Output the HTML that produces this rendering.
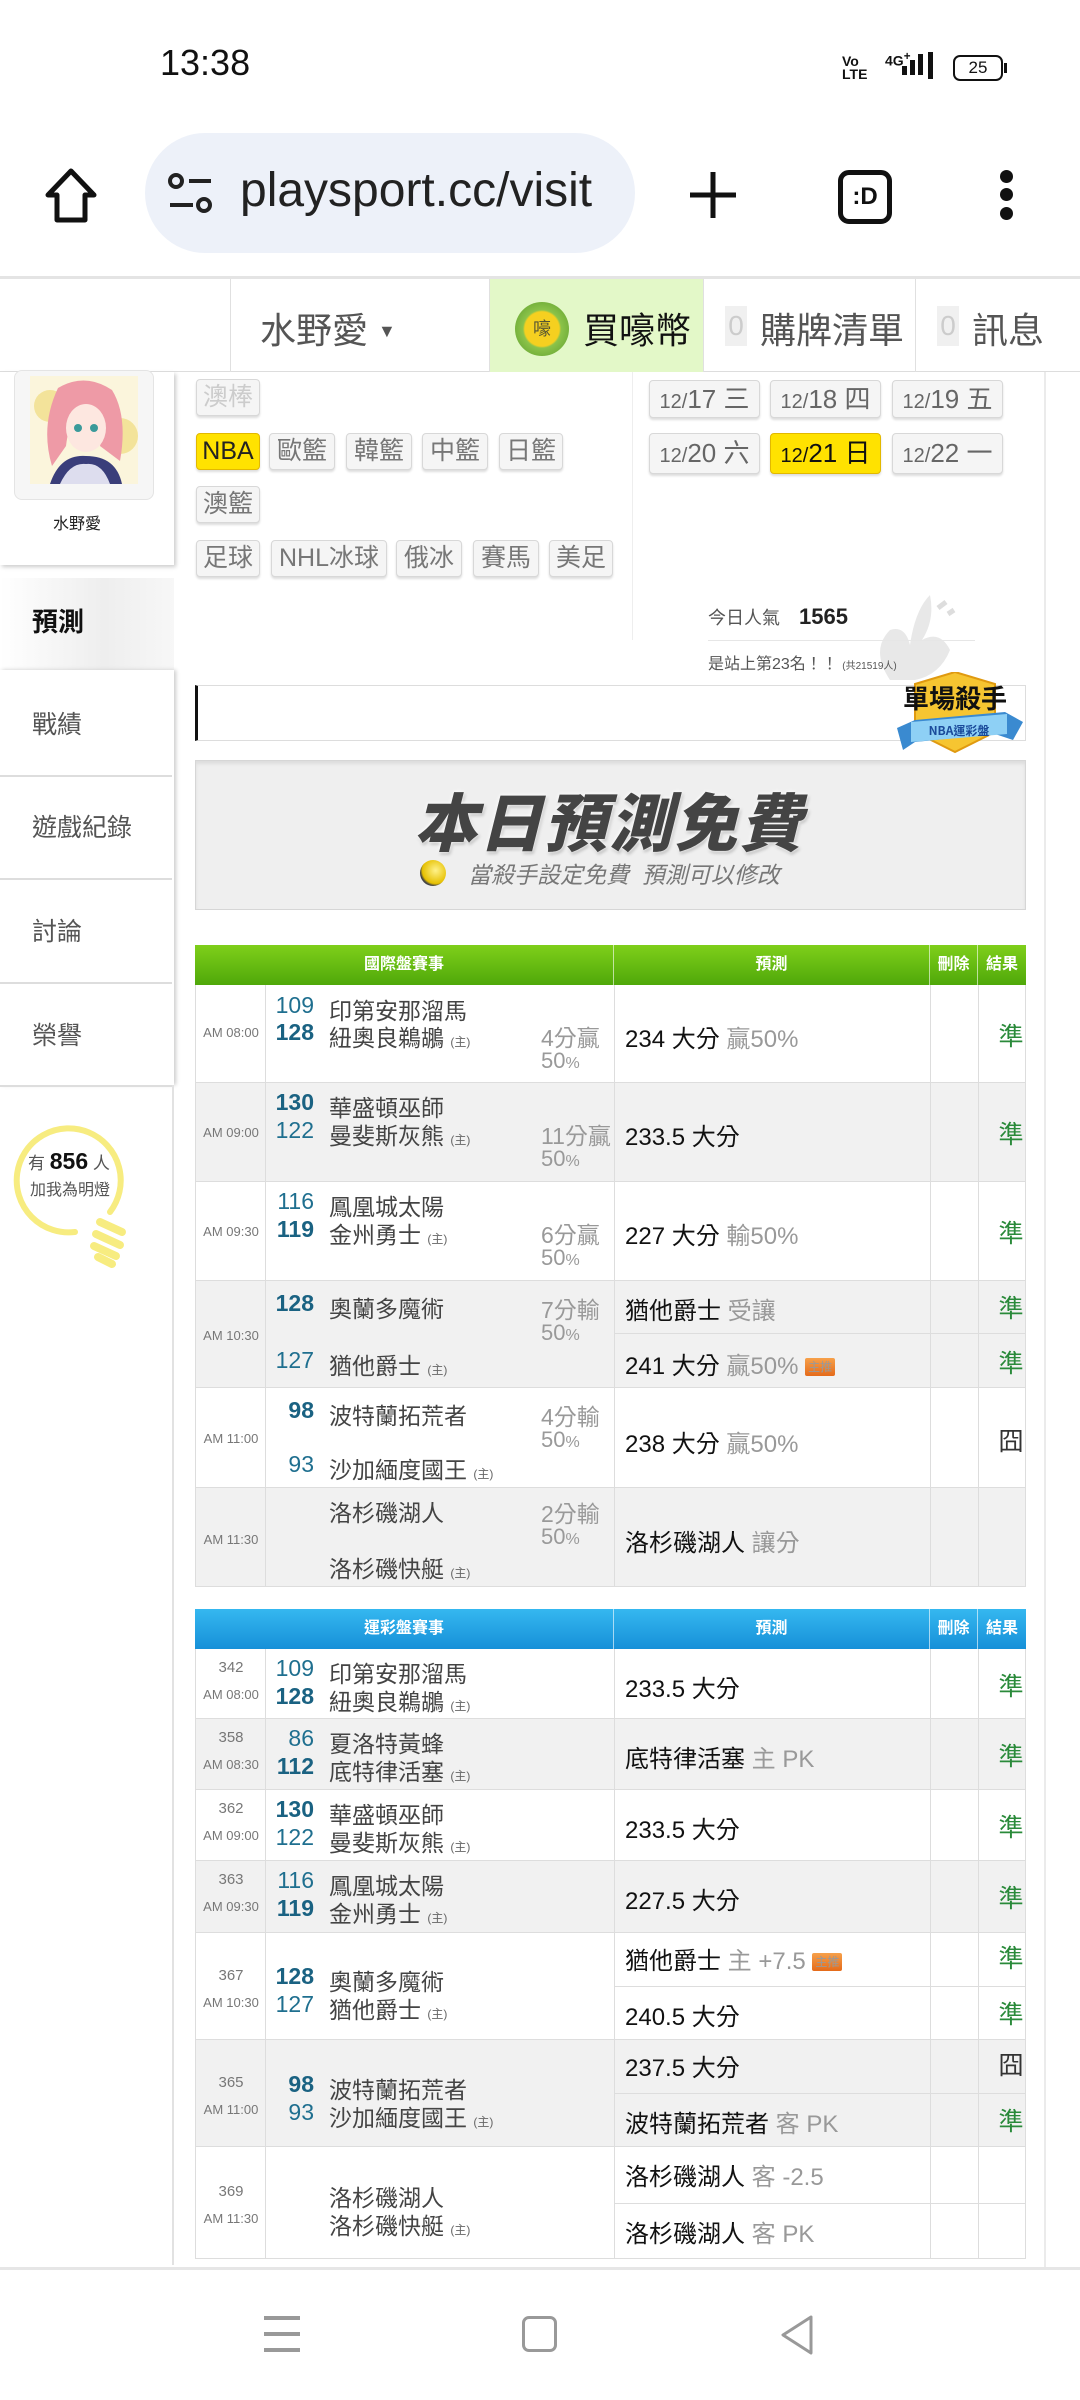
<!DOCTYPE html>
<html><head><meta charset="utf-8"><style>
*{margin:0;padding:0;box-sizing:border-box}
body{width:1080px;height:2400px;position:relative;background:#fff;font-family:"Liberation Sans","Noto Sans CJK TC",sans-serif;color:#333;overflow:hidden}
.a{position:absolute;white-space:nowrap}
.tag{position:absolute;height:37px;background:#f5f5f5;border:1px solid #d8d8d8;border-radius:4px;box-shadow:0 2px 2px #ddd;color:#777;font-size:25px;line-height:35px;text-align:center}
.dt{position:absolute;width:111px;height:38px;background:#f5f5f5;border:1px solid #d8d8d8;border-radius:4px;box-shadow:0 2px 2px #ddd;color:#666;text-align:center;line-height:36px;font-size:26px}
.dt small{font-size:20px}
.hd{position:absolute;left:195px;width:831px;height:40px;color:#fff;font-size:16px;font-weight:bold}
.hd div{position:absolute;top:0;height:40px;line-height:40px;text-align:center;border-right:1px solid rgba(255,255,255,.6)}
.row{position:absolute;left:195px;width:831px;border-bottom:1px solid #ddd;border-left:1px solid #ddd;border-right:1px solid #ddd}
.g{background:#f1f1f1}
.vl{position:absolute;top:0;bottom:0;width:1px;background:#ddd}
.tm{position:absolute;left:0;width:70px;text-align:center;font-size:13px;color:#777}
.num{position:absolute;width:50px;left:68px;text-align:right;font-size:23px;color:#1f6f8f}
.b{font-weight:bold;color:#1a6282}
.tn{position:absolute;left:133px;font-size:23px;color:#444}
.tn i{font-style:normal;font-size:12px;color:#666}
.sp{position:absolute;left:345px;font-size:23px;color:#999}
.sp i{font-style:normal;font-size:22px}
.sp i small{font-size:16px}
.pr{position:absolute;left:429px;font-size:24px;color:#111}
.pr span{color:#999}
.ok{position:absolute;left:791px;width:48px;text-align:center;font-size:25px;color:#2a8a3a}
.sl{position:absolute;left:419px;width:411px;height:1px;background:#ddd}
.zt{display:inline-block;background:linear-gradient(#f7a04a,#e56a1a);color:#fff;font-size:12px;line-height:18px;padding:0 3px;border-radius:2px;vertical-align:3px}
</style></head><body>

<!-- status bar -->
<div class="a" style="left:160px;top:42px;font-size:36px;color:#111">13:38</div>
<div class="a" style="left:842px;top:55px;font-size:14px;font-weight:bold;line-height:13px;color:#111">Vo<br>LTE</div>
<div class="a" style="left:885px;top:50px;font-size:14px;font-weight:bold;color:#111">4G<sup>+</sup></div>
<div class="a" style="left:902px;top:66px;width:5px;height:9px;background:#111"></div>
<div class="a" style="left:910px;top:60px;width:5px;height:15px;background:#111"></div>
<div class="a" style="left:918px;top:54px;width:5px;height:21px;background:#111"></div>
<div class="a" style="left:928px;top:52px;width:5px;height:27px;background:#111"></div>
<div class="a" style="left:953px;top:55px;width:50px;height:26px;border:2px solid #111;border-radius:7px;font-size:17px;text-align:center;line-height:22px;color:#111">25</div>
<div class="a" style="left:1004px;top:63px;width:3px;height:10px;background:#111"></div>

<!-- url bar -->
<svg class="a" style="left:40px;top:165px" width="62" height="62" viewBox="0 0 62 62"><path d="M31 6 L8 30 H17 V55 H45 V30 H54 Z" fill="none" stroke="#111" stroke-width="5" stroke-linejoin="round"/></svg>
<div class="a" style="left:145px;top:133px;width:490px;height:120px;border-radius:60px;background:#edf1f9"></div>
<svg class="a" style="left:167px;top:172px" width="48" height="42" viewBox="0 0 48 42"><circle cx="9" cy="9" r="6" fill="none" stroke="#222" stroke-width="4"/><path d="M22 9 H44 M3 33 H26" stroke="#222" stroke-width="4"/><circle cx="37" cy="33" r="6" fill="none" stroke="#222" stroke-width="4"/></svg>
<div class="a" style="left:240px;top:163px;font-size:48px;color:#222;width:380px;overflow:hidden">playsport.cc/visit</div>
<svg class="a" style="left:688px;top:170px" width="50" height="50"><path d="M25 2 V48 M2 25 H48" stroke="#111" stroke-width="5"/></svg>
<div class="a" style="left:838px;top:170px;width:54px;height:54px;border:5px solid #111;border-radius:11px;font-size:24px;font-weight:bold;line-height:44px;text-align:center;color:#111">:D</div>
<div class="a" style="left:1000px;top:170px;width:13px;height:13px;border-radius:50%;background:#111"></div>
<div class="a" style="left:1000px;top:188px;width:13px;height:13px;border-radius:50%;background:#111"></div>
<div class="a" style="left:1000px;top:207px;width:13px;height:13px;border-radius:50%;background:#111"></div>

<!-- top nav -->
<div class="a" style="left:0;top:276px;width:1080px;height:3px;background:#e4e4e4"></div>
<div class="a" style="left:0;top:279px;width:1080px;height:93px;border-bottom:1px solid #ddd;background:#fff"></div>
<div class="a" style="left:230px;top:279px;width:1px;height:93px;background:#e0e0e0"></div>
<div class="a" style="left:489px;top:279px;width:215px;height:93px;background:#e3f8c8;border-left:1px solid #e0e0e0;border-right:1px solid #e0e0e0"></div>
<div class="a" style="left:915px;top:279px;width:1px;height:93px;background:#e0e0e0"></div>
<div class="a" style="left:260px;top:302px;font-size:36px;color:#555">水野愛 <span style="font-size:18px;vertical-align:6px">▼</span></div>
<div class="a" style="left:515px;top:302px;width:54px;height:54px;border-radius:50%;background:radial-gradient(#f5d020 45%,#8bc34a 50%,#5a9a2a);font-size:18px;text-align:center;line-height:54px;color:#553">嚎</div>
<div class="a" style="left:583px;top:302px;font-size:36px;color:#111">買嚎幣</div>
<div class="a" style="left:725px;top:306px;width:22px;height:40px;background:#f0f0f0;color:#ccc;font-size:28px;text-align:center;line-height:40px">0</div>
<div class="a" style="left:760px;top:302px;font-size:36px;color:#555">購牌清單</div>
<div class="a" style="left:937px;top:306px;width:22px;height:40px;background:#f0f0f0;color:#ccc;font-size:28px;text-align:center;line-height:40px">0</div>
<div class="a" style="left:972px;top:302px;font-size:36px;color:#555">訊息</div>

<!-- sidebar -->
<div class="a" style="left:0;top:372px;width:174px;height:193px;background:#fff;box-shadow:2px 2px 4px #ccc"></div>
<div class="a" style="left:14px;top:370px;width:140px;height:130px;background:#f6f6f6;border:1px solid #e4e4e4;border-radius:8px"></div>
<svg class="a" style="left:30px;top:376px" width="108" height="108" viewBox="0 0 108 108">
<rect width="108" height="108" fill="#fbf5dc"/><circle cx="20" cy="30" r="16" fill="#f3e39a"/><circle cx="90" cy="60" r="18" fill="#f3e39a"/>
<path d="M28 12 Q55 -4 82 14 Q98 40 90 85 L70 70 Q78 40 60 30 Q40 35 36 70 L22 90 Q10 50 28 12Z" fill="#ee9aa6"/>
<ellipse cx="56" cy="52" rx="20" ry="24" fill="#fde7e0"/>
<circle cx="48" cy="52" r="4" fill="#3a9a9a"/><circle cx="64" cy="52" r="4" fill="#3a9a9a"/>
<path d="M20 108 Q30 78 56 80 Q86 80 92 108Z" fill="#3a3e7a"/><path d="M30 108 Q40 86 56 88 Q72 86 80 108Z" fill="#dde"/>
</svg>
<div class="a" style="left:0;top:510px;width:154px;text-align:center;font-size:16px;color:#222">水野愛</div>
<div class="a" style="left:0;top:578px;width:174px;height:92px;background:linear-gradient(90deg,#fff 0%,#eee 60%,#f7f7f7 100%)"></div>
<div class="a" style="left:32px;top:602px;font-size:26px;font-weight:bold;color:#111">預測</div>
<div class="a" style="left:0;top:670px;width:174px;height:415px;background:#fff;box-shadow:2px 0 4px #ccc"></div>
<div class="a" style="left:32px;top:705px;font-size:25px;color:#555">戰績</div>
<div class="a" style="left:0;top:775px;width:172px;height:2px;background:#ddd"></div>
<div class="a" style="left:32px;top:808px;font-size:25px;color:#555">遊戲紀錄</div>
<div class="a" style="left:0;top:878px;width:172px;height:2px;background:#ddd"></div>
<div class="a" style="left:32px;top:912px;font-size:25px;color:#555">討論</div>
<div class="a" style="left:0;top:982px;width:172px;height:2px;background:#ddd"></div>
<div class="a" style="left:32px;top:1016px;font-size:25px;color:#555">榮譽</div>
<div class="a" style="left:0;top:1085px;width:172px;height:2px;background:#ddd"></div>
<div class="a" style="left:172px;top:1085px;width:2px;height:1180px;background:#e2e2e2"></div>
<svg class="a" style="left:10px;top:1122px" width="120" height="150" viewBox="0 0 120 150">
<path d="M65 110 A52 52 0 1 1 100 90" fill="none" stroke="#f7ec80" stroke-width="6" stroke-linecap="round"/>
<path d="M90 100 l22 10 M86 112 l24 11 M84 124 l22 10 M88 135 l14 7" stroke="#f7ec80" stroke-width="8" stroke-linecap="round"/></svg>
<div class="a" style="left:28px;top:1148px;font-size:17px;color:#555">有 <b style="font-size:23px;color:#111">856</b> 人</div>
<div class="a" style="left:30px;top:1176px;font-size:16px;color:#555">加我為明燈</div>

<!-- right gutter line -->
<div class="a" style="left:1044px;top:372px;width:2px;height:1895px;background:#ebebeb"></div>

<!-- tags -->
<div class="tag" style="left:196px;top:379px;width:64px;color:#ccc">澳棒</div>
<div class="tag" style="left:196px;top:433px;width:64px;background:#ffe200;border-color:#e2b800;color:#222">NBA</div>
<div class="tag" style="left:269px;top:433px;width:66px">歐籃</div>
<div class="tag" style="left:346px;top:433px;width:66px">韓籃</div>
<div class="tag" style="left:422px;top:433px;width:66px">中籃</div>
<div class="tag" style="left:499px;top:433px;width:64px">日籃</div>
<div class="tag" style="left:196px;top:486px;width:64px">澳籃</div>
<div class="tag" style="left:196px;top:540px;width:64px">足球</div>
<div class="tag" style="left:271px;top:540px;width:116px">NHL冰球</div>
<div class="tag" style="left:396px;top:540px;width:66px">俄冰</div>
<div class="tag" style="left:473px;top:540px;width:66px">賽馬</div>
<div class="tag" style="left:549px;top:540px;width:64px">美足</div>
<div class="a" style="left:632px;top:372px;width:1px;height:268px;background:#eee"></div>
<div class="dt" style="left:649px;top:380px"><small>12/</small>17 三</div>
<div class="dt" style="left:770px;top:380px"><small>12/</small>18 四</div>
<div class="dt" style="left:892px;top:380px"><small>12/</small>19 五</div>
<div class="dt" style="left:649px;top:433px;height:41px;line-height:39px"><small>12/</small>20 六</div>
<div class="dt" style="left:770px;top:433px;height:41px;line-height:39px;background:#ffe200;border-color:#e2b800;color:#111"><small>12/</small>21 日</div>
<div class="dt" style="left:892px;top:433px;height:41px;line-height:39px"><small>12/</small>22 一</div>

<!-- stats -->
<svg class="a" style="left:860px;top:590px" width="120" height="95" viewBox="0 0 120 95"><path d="M30 90 Q10 60 30 40 Q45 35 50 55 Q55 20 70 5 Q75 30 62 50 Q80 40 90 60 Q80 85 55 90Z" fill="#e8e8e8"/><path d="M78 18 l8 -6 M88 24 l6 -4" stroke="#ddd" stroke-width="5"/></svg>
<div class="a" style="left:708px;top:604px;font-size:18px;color:#555">今日人氣 <b style="font-size:22px;color:#222;margin-left:14px">1565</b></div>
<div class="a" style="left:708px;top:640px;width:267px;height:1px;background:#e6e6e6"></div>
<div class="a" style="left:708px;top:650px;font-size:16px;color:#555">是站上第23名！！ <span style="font-size:10px">(共21519人)</span></div>
<div class="a" style="left:195px;top:685px;width:831px;height:56px;border:1px solid #ddd;border-left:3px solid #111;background:#fff"></div>
<svg class="a" style="left:895px;top:672px" width="130" height="85" viewBox="0 0 130 85">
<path d="M20 12 L60 0 L100 12 L100 60 L60 80 L20 60Z" fill="#f6c531" stroke="#e09a10" stroke-width="2"/>
<path d="M2 56 L20 48 L110 40 L128 50 L118 68 L100 62 L20 70 L8 78Z" fill="#3a8ad0"/>
<path d="M16 50 L112 42 L112 62 L16 70Z" fill="#8ed0f5"/>
<text x="60" y="36" text-anchor="middle" font-family="Noto Sans CJK TC" font-weight="bold" font-size="26" fill="#111">單場殺手</text>
<text x="64" y="63" text-anchor="middle" font-family="Noto Sans CJK TC" font-weight="bold" font-size="12" fill="#1a4a9a">NBA運彩盤</text></svg>

<!-- banner -->
<div class="a" style="left:195px;top:760px;width:831px;height:150px;background:#efefef;border:1px solid #d6d6d6;box-shadow:inset 0 3px 3px #ddd"></div>
<div class="a" style="left:414px;top:774px;font-size:63px;font-weight:900;font-style:italic;color:#444;letter-spacing:2px;text-shadow:0 0 3px #fff,0 0 5px #fff,1px 2px 3px #999">本日預測免費</div>
<div class="a" style="left:420px;top:860px;width:26px;height:26px;border-radius:50%;background:radial-gradient(circle at 60% 40%,#fff28a,#e6c000 60%,#444 70%)"></div>
<div class="a" style="left:468px;top:856px;font-size:23px;font-style:italic;color:#777">當殺手設定免費 &nbsp;預測可以修改</div>

<!-- table 1 -->
<div class="hd" style="top:945px;background:linear-gradient(#7fcf1a,#4fa80a)">
<div style="left:0;width:419px">國際盤賽事</div><div style="left:419px;width:316px">預測</div><div style="left:735px;width:48px">刪除</div><div style="left:783px;width:48px;border:0">結果</div></div>

<div class="row" style="top:985px;height:98px"><div class="vl" style="left:69px"></div><div class="vl" style="left:418px"></div><div class="vl" style="left:734px"></div><div class="vl" style="left:782px"></div>
<div class="tm" style="top:40px">AM 08:00</div>
<div class="num" style="top:7px">109</div><div class="tn" style="top:7px">印第安那溜馬</div>
<div class="num b" style="top:34px">128</div><div class="tn" style="top:34px">紐奧良鵜鶘 <i>(主)</i></div>
<div class="sp" style="top:34px">4分贏</div><div class="sp" style="top:62px"><i>50<small>%</small></i></div>
<div class="pr" style="top:34px">234 大分 <span>贏50%</span></div><div class="ok" style="top:32px">準</div></div>

<div class="row g" style="top:1083px;height:99px"><div class="vl" style="left:69px"></div><div class="vl" style="left:418px"></div><div class="vl" style="left:734px"></div><div class="vl" style="left:782px"></div>
<div class="tm" style="top:42px">AM 09:00</div>
<div class="num b" style="top:6px">130</div><div class="tn" style="top:6px">華盛頓巫師</div>
<div class="num" style="top:34px">122</div><div class="tn" style="top:34px">曼斐斯灰熊 <i>(主)</i></div>
<div class="sp" style="top:34px">11分贏</div><div class="sp" style="top:62px"><i>50<small>%</small></i></div>
<div class="pr" style="top:34px">233.5 大分</div><div class="ok" style="top:32px">準</div></div>

<div class="row" style="top:1182px;height:99px"><div class="vl" style="left:69px"></div><div class="vl" style="left:418px"></div><div class="vl" style="left:734px"></div><div class="vl" style="left:782px"></div>
<div class="tm" style="top:42px">AM 09:30</div>
<div class="num" style="top:6px">116</div><div class="tn" style="top:6px">鳳凰城太陽</div>
<div class="num b" style="top:34px">119</div><div class="tn" style="top:34px">金州勇士 <i>(主)</i></div>
<div class="sp" style="top:34px">6分贏</div><div class="sp" style="top:62px"><i>50<small>%</small></i></div>
<div class="pr" style="top:34px">227 大分 <span>輸50%</span></div><div class="ok" style="top:32px">準</div></div>

<div class="row g" style="top:1281px;height:107px"><div class="vl" style="left:69px"></div><div class="vl" style="left:418px"></div><div class="vl" style="left:734px"></div><div class="vl" style="left:782px"></div><div class="sl" style="top:52px"></div>
<div class="tm" style="top:47px">AM 10:30</div>
<div class="num b" style="top:9px">128</div><div class="tn" style="top:9px">奧蘭多魔術</div>
<div class="num" style="top:66px">127</div><div class="tn" style="top:66px">猶他爵士 <i>(主)</i></div>
<div class="sp" style="top:10px">7分輸</div><div class="sp" style="top:38px"><i>50<small>%</small></i></div>
<div class="pr" style="top:10px">猶他爵士 <span>受讓</span></div><div class="ok" style="top:8px">準</div>
<div class="pr" style="top:65px">241 大分 <span>贏50%</span> <span class="zt">主推</span></div><div class="ok" style="top:63px">準</div></div>

<div class="row" style="top:1388px;height:100px"><div class="vl" style="left:69px"></div><div class="vl" style="left:418px"></div><div class="vl" style="left:734px"></div><div class="vl" style="left:782px"></div>
<div class="tm" style="top:43px">AM 11:00</div>
<div class="num b" style="top:9px">98</div><div class="tn" style="top:9px">波特蘭拓荒者</div>
<div class="num" style="top:63px">93</div><div class="tn" style="top:63px">沙加緬度國王 <i>(主)</i></div>
<div class="sp" style="top:10px">4分輸</div><div class="sp" style="top:38px"><i>50<small>%</small></i></div>
<div class="pr" style="top:36px">238 大分 <span>贏50%</span></div><div class="ok" style="top:34px;color:#333">囧</div></div>

<div class="row g" style="top:1488px;height:99px"><div class="vl" style="left:69px"></div><div class="vl" style="left:418px"></div><div class="vl" style="left:734px"></div><div class="vl" style="left:782px"></div>
<div class="tm" style="top:44px">AM 11:30</div>
<div class="tn" style="top:6px">洛杉磯湖人</div>
<div class="tn" style="top:62px">洛杉磯快艇 <i>(主)</i></div>
<div class="sp" style="top:7px">2分輸</div><div class="sp" style="top:35px"><i>50<small>%</small></i></div>
<div class="pr" style="top:35px">洛杉磯湖人 <span>讓分</span></div></div>

<!-- table 2 -->
<div class="hd" style="top:1609px;background:linear-gradient(#35b8f0,#1690d8)">
<div style="left:0;width:419px">運彩盤賽事</div><div style="left:419px;width:316px">預測</div><div style="left:735px;width:48px">刪除</div><div style="left:783px;width:48px;border:0">結果</div></div>

<div class="row" style="top:1649px;height:70px"><div class="vl" style="left:69px"></div><div class="vl" style="left:418px"></div><div class="vl" style="left:734px"></div><div class="vl" style="left:782px"></div>
<div class="tm" style="top:10px;font-size:15px">342</div><div class="tm" style="top:38px">AM 08:00</div>
<div class="num" style="top:6px">109</div><div class="tn" style="top:6px">印第安那溜馬</div>
<div class="num b" style="top:34px">128</div><div class="tn" style="top:34px">紐奧良鵜鶘 <i>(主)</i></div>
<div class="pr" style="top:20px">233.5 大分</div><div class="ok" style="top:18px">準</div></div>

<div class="row g" style="top:1719px;height:71px"><div class="vl" style="left:69px"></div><div class="vl" style="left:418px"></div><div class="vl" style="left:734px"></div><div class="vl" style="left:782px"></div>
<div class="tm" style="top:10px;font-size:15px">358</div><div class="tm" style="top:38px">AM 08:30</div>
<div class="num" style="top:6px">86</div><div class="tn" style="top:6px">夏洛特黃蜂</div>
<div class="num b" style="top:34px">112</div><div class="tn" style="top:34px">底特律活塞 <i>(主)</i></div>
<div class="pr" style="top:20px">底特律活塞 <span>主 PK</span></div><div class="ok" style="top:18px">準</div></div>

<div class="row" style="top:1790px;height:71px"><div class="vl" style="left:69px"></div><div class="vl" style="left:418px"></div><div class="vl" style="left:734px"></div><div class="vl" style="left:782px"></div>
<div class="tm" style="top:10px;font-size:15px">362</div><div class="tm" style="top:38px">AM 09:00</div>
<div class="num b" style="top:6px">130</div><div class="tn" style="top:6px">華盛頓巫師</div>
<div class="num" style="top:34px">122</div><div class="tn" style="top:34px">曼斐斯灰熊 <i>(主)</i></div>
<div class="pr" style="top:20px">233.5 大分</div><div class="ok" style="top:18px">準</div></div>

<div class="row g" style="top:1861px;height:72px"><div class="vl" style="left:69px"></div><div class="vl" style="left:418px"></div><div class="vl" style="left:734px"></div><div class="vl" style="left:782px"></div>
<div class="tm" style="top:10px;font-size:15px">363</div><div class="tm" style="top:38px">AM 09:30</div>
<div class="num" style="top:6px">116</div><div class="tn" style="top:6px">鳳凰城太陽</div>
<div class="num b" style="top:34px">119</div><div class="tn" style="top:34px">金州勇士 <i>(主)</i></div>
<div class="pr" style="top:20px">227.5 大分</div><div class="ok" style="top:18px">準</div></div>

<div class="row" style="top:1933px;height:107px"><div class="vl" style="left:69px"></div><div class="vl" style="left:418px"></div><div class="vl" style="left:734px"></div><div class="vl" style="left:782px"></div><div class="sl" style="top:53px"></div>
<div class="tm" style="top:34px;font-size:15px">367</div><div class="tm" style="top:62px">AM 10:30</div>
<div class="num b" style="top:30px">128</div><div class="tn" style="top:30px">奧蘭多魔術</div>
<div class="num" style="top:58px">127</div><div class="tn" style="top:58px">猶他爵士 <i>(主)</i></div>
<div class="pr" style="top:8px">猶他爵士 <span>主 +7.5</span> <span class="zt">主推</span></div><div class="ok" style="top:6px">準</div>
<div class="pr" style="top:64px">240.5 大分</div><div class="ok" style="top:62px">準</div></div>

<div class="row g" style="top:2040px;height:107px"><div class="vl" style="left:69px"></div><div class="vl" style="left:418px"></div><div class="vl" style="left:734px"></div><div class="vl" style="left:782px"></div><div class="sl" style="top:53px"></div>
<div class="tm" style="top:34px;font-size:15px">365</div><div class="tm" style="top:62px">AM 11:00</div>
<div class="num b" style="top:31px">98</div><div class="tn" style="top:31px">波特蘭拓荒者</div>
<div class="num" style="top:59px">93</div><div class="tn" style="top:59px">沙加緬度國王 <i>(主)</i></div>
<div class="pr" style="top:8px">237.5 大分</div><div class="ok" style="top:6px;color:#333">囧</div>
<div class="pr" style="top:64px">波特蘭拓荒者 <span>客 PK</span></div><div class="ok" style="top:62px">準</div></div>

<div class="row" style="top:2147px;height:112px"><div class="vl" style="left:69px"></div><div class="vl" style="left:418px"></div><div class="vl" style="left:734px"></div><div class="vl" style="left:782px"></div><div class="sl" style="top:56px"></div>
<div class="tm" style="top:36px;font-size:15px">369</div><div class="tm" style="top:64px">AM 11:30</div>
<div class="tn" style="top:32px">洛杉磯湖人</div>
<div class="tn" style="top:60px">洛杉磯快艇 <i>(主)</i></div>
<div class="pr" style="top:10px">洛杉磯湖人 <span>客 -2.5</span></div>
<div class="pr" style="top:67px">洛杉磯湖人 <span>客 PK</span></div></div>

<!-- bottom nav -->
<div class="a" style="left:0;top:2267px;width:1080px;height:133px;background:#fff;border-top:3px solid #e6e6e6"></div>
<div class="a" style="left:264px;top:2316px;width:36px;height:4px;background:#999"></div>
<div class="a" style="left:264px;top:2332px;width:36px;height:4px;background:#999"></div>
<div class="a" style="left:264px;top:2348px;width:36px;height:4px;background:#999"></div>
<div class="a" style="left:522px;top:2316px;width:35px;height:36px;border:3px solid #999;border-radius:7px"></div>
<svg class="a" style="left:778px;top:2314px" width="40" height="42" viewBox="0 0 40 42"><path d="M33 3 L5 21 L33 39 Z" fill="none" stroke="#999" stroke-width="3" stroke-linejoin="round"/></svg>
</body></html>
